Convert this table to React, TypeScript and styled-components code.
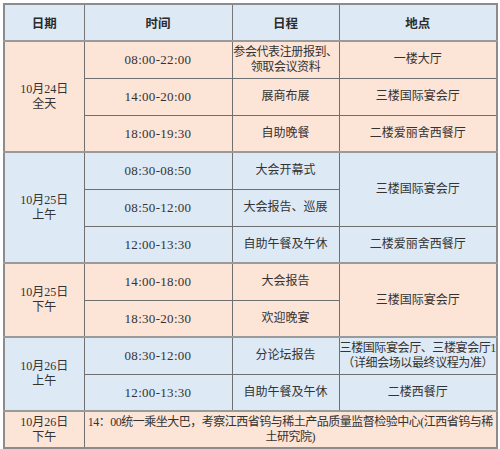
import React, { FC } from "react";
import styled, { createGlobalStyle } from "styled-components";

const GlobalStyle = createGlobalStyle`
  html, body {
    margin: 0;
    padding: 0;
    background: #ffffff;
  }
`;

const PEACH = "#fce4d7";
const BLUE = "#dde9f5";

const Page = styled.div`
  padding: 3px 4px 0 3px;
`;

const Table = styled.table`
  width: 493px;
  table-layout: fixed;
  border-collapse: collapse;
  border: 2px solid #8c8c8c;
  font-family: "Liberation Serif", "Noto Sans CJK SC", serif;
  font-size: 12px;
  color: #333;
`;

const Row = styled.tr<{ $tone: "peach" | "blue" }>`
  height: 37px;
  background: ${(p) => (p.$tone === "peach" ? PEACH : BLUE)};
`;

const HeadCell = styled.th`
  height: 35px;
  padding: 0;
  background: ${BLUE};
  border: 1px solid #777;
  border-bottom: 2px solid #9a9a9a;
  font-family: "Noto Sans CJK SC", sans-serif;
  font-size: 12.5px;
  font-weight: 700;
  color: #2b2b2b;
  text-align: center;
`;

const Cell = styled.td<{ $groupStart?: boolean; $tight?: boolean }>`
  padding: 0;
  border: 1px solid #6f6f6f;
  ${(p) => (p.$groupStart ? "border-top: 2px solid #9a9a9a;" : "")}
  text-align: center;
  vertical-align: middle;
  line-height: 15px;
  white-space: nowrap;
  overflow: hidden;
  ${(p) => (p.$tight ? "letter-spacing: -0.4px;" : "")}
`;

const DateCell = styled(Cell)`
  font-size: 12px;
  line-height: 15px;
`;

const TimeCell = styled(Cell)`
  font-size: 13px;
  letter-spacing: 0.3px;
`;

const NoteCell = styled(Cell)`
  letter-spacing: -0.5px;
  line-height: 15px;
  padding: 1px 1px 0;
`;

type Item = { time: string; event: React.ReactNode; place?: React.ReactNode; placeSpan?: number };
type Group = { date: string; part: string; tone: "peach" | "blue"; items: Item[] };

const groups: Group[] = [
  {
    date: "10月24日",
    part: "全天",
    tone: "peach",
    items: [
      { time: "08:00-22:00", event: <>参会代表注册报到、<br />领取会议资料</>, place: "一楼大厅" },
      { time: "14:00-20:00", event: "展商布展", place: "三楼国际宴会厅" },
      { time: "18:00-19:30", event: "自助晚餐", place: "二楼爱丽舍西餐厅" },
    ],
  },
  {
    date: "10月25日",
    part: "上午",
    tone: "blue",
    items: [
      { time: "08:30-08:50", event: "大会开幕式", place: "三楼国际宴会厅", placeSpan: 2 },
      { time: "08:50-12:00", event: "大会报告、巡展" },
      { time: "12:00-13:30", event: "自助午餐及午休", place: "二楼爱丽舍西餐厅" },
    ],
  },
  {
    date: "10月25日",
    part: "下午",
    tone: "peach",
    items: [
      { time: "14:00-18:00", event: "大会报告", place: "三楼国际宴会厅", placeSpan: 2 },
      { time: "18:30-20:30", event: "欢迎晚宴" },
    ],
  },
  {
    date: "10月26日",
    part: "上午",
    tone: "blue",
    items: [
      {
        time: "08:30-12:00",
        event: "分论坛报告",
        place: <>三楼国际宴会厅、三楼宴会厅1<br />（详细会场以最终议程为准）</>,
      },
      { time: "12:00-13:30", event: "自助午餐及午休", place: "二楼西餐厅" },
    ],
  },
];

const App: FC = () => {
  return (
    <Page>
      <GlobalStyle />
      <Table>
        <colgroup>
          <col style={{ width: 80 }} />
          <col style={{ width: 148 }} />
          <col style={{ width: 107 }} />
          <col style={{ width: 158 }} />
        </colgroup>
        <thead>
          <tr>
            <HeadCell>日期</HeadCell>
            <HeadCell>时间</HeadCell>
            <HeadCell>日程</HeadCell>
            <HeadCell>地点</HeadCell>
          </tr>
        </thead>
        <tbody>
          {groups.map((g, gi) =>
            g.items.map((it, i) => (
              <Row key={`${gi}-${i}`} $tone={g.tone}>
                {i === 0 && (
                  <DateCell rowSpan={g.items.length} $groupStart={gi > 0}>
                    {g.date}
                    <br />
                    {g.part}
                  </DateCell>
                )}
                <TimeCell $groupStart={gi > 0 && i === 0}>{it.time}</TimeCell>
                <Cell $groupStart={gi > 0 && i === 0} $tight={gi === 0 && i === 0}>
                  {it.event}
                </Cell>
                {it.place !== undefined && (
                  <Cell
                    rowSpan={it.placeSpan ?? 1}
                    $groupStart={gi > 0 && i === 0}
                    $tight={gi === 3 && i === 0}
                  >
                    {it.place}
                  </Cell>
                )}
              </Row>
            ))
          )}
          <Row $tone="peach">
            <DateCell $groupStart>
              10月26日
              <br />
              下午
            </DateCell>
            <NoteCell colSpan={3} $groupStart>
              14：00统一乘坐大巴，考察江西省钨与稀土产品质量监督检验中心(江西省钨与稀
              <br />
              土研究院)
            </NoteCell>
          </Row>
        </tbody>
      </Table>
    </Page>
  );
};

export default App;
